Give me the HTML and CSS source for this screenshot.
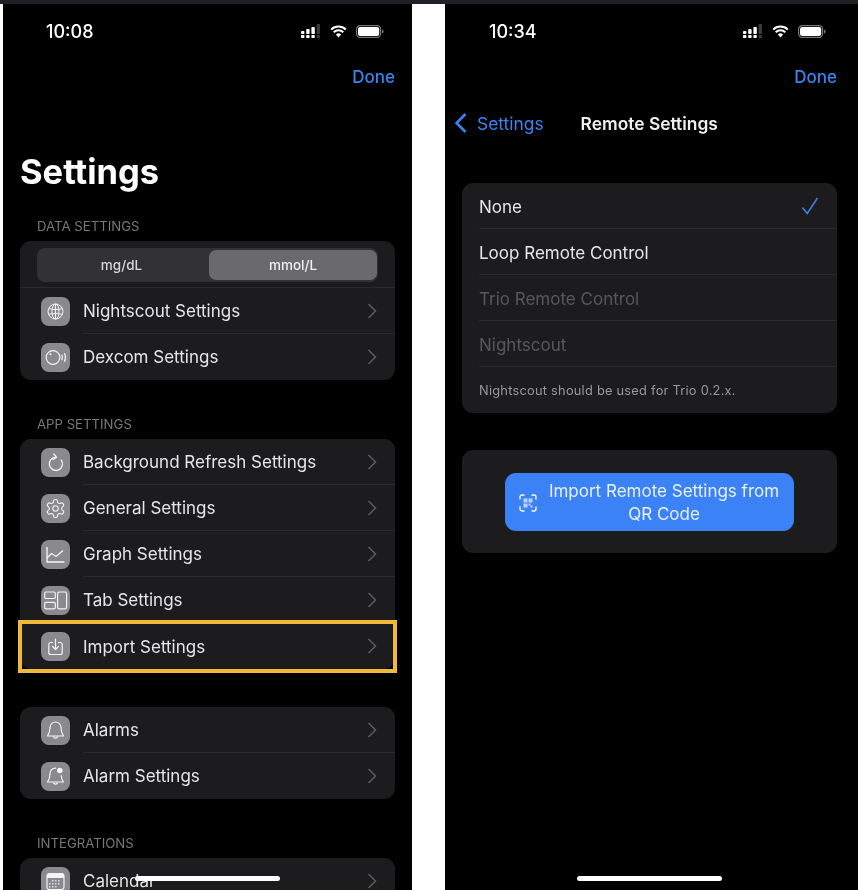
FILE: index.html
```html
<!DOCTYPE html>
<html>
<head>
    <meta charset="UTF-8">
    <title>Settings</title>
    <link rel="stylesheet" href="styles.css">
</head>
<body>
    <div class="strip"></div>
    <div class="screens">
        <section class="phone phone-a">
            <div class="status">
                <span class="time">10:08</span>
                <div class="status-icons">
                    <svg width="20" height="14" viewBox="0 0 20 14"><g fill="#fff"><rect x="0" y="7" width="3.4" height="3" rx=".8"/><rect x="0" y="11" width="3.4" height="3" rx=".8"/><rect x="5.2" y="5" width="3.4" height="5" rx=".8"/><rect x="5.2" y="11" width="3.4" height="3" rx=".8"/><rect x="10.4" y="3" width="3.4" height="7" rx=".8"/><rect x="10.4" y="11" width="3.4" height="3" rx=".8"/></g><g fill="#3a3a3c"><rect x="15.6" y="0" width="3.4" height="10" rx=".8"/><rect x="15.6" y="11" width="3.4" height="3" rx=".8"/></g></svg>
                    <svg width="17" height="13" viewBox="0 0 17 13"><path d="M1.2 4.6a10.4 10.4 0 0 1 14.6 0M3.7 7.2a6.9 6.9 0 0 1 9.6 0" fill="none" stroke="#fff" stroke-width="2"/><path d="M5.9 9.5a3.7 3.7 0 0 1 5.2 0L8.5 12.6z" fill="#fff"/></svg>
                    <svg width="28" height="13" viewBox="0 0 28 13"><rect x=".6" y=".6" width="24" height="11.8" rx="3.6" fill="none" stroke="#77777a" stroke-width="1.2"/><rect x="2" y="2" width="21.2" height="9" rx="2.2" fill="#fff"/><path d="M26 4.5c1 .3 1.6 1 1.6 2s-.6 1.7-1.6 2z" fill="#77777a"/></svg>
                </div>
            </div>
            <div class="nav"><a class="done">Done</a></div>
            <h1 class="title">Settings</h1>

            <h2 class="group-label first">DATA SETTINGS</h2>
            <div class="card">
                <div class="units">
                    <div class="units-box">
                        <span class="unit">mg/dL</span>
                        <span class="unit unit-on">mmol/L</span>
                    </div>
                </div>
                <div class="row">
                    <span class="icon"><svg width="29" height="29" viewBox="0 0 29 29"><g fill="none" stroke="#fff" stroke-width="1"><circle cx="14.5" cy="14.5" r="7.5"/><ellipse cx="14.5" cy="14.5" rx="3.5" ry="7.5"/><path d="M14.5 7v15M7.6 11.5c4 1.3 9.8 1.3 13.8 0M7.6 17.5c4-1.3 9.8-1.3 13.8 0"/></g></svg></span>
                    <span class="label">Nightscout Settings</span>
                    <svg class="chev" width="10" height="16" viewBox="0 0 10 16"><path d="M1.5 1l7 7-7 7"/></svg>
                </div>
                <div class="row">
                    <span class="icon"><svg width="29" height="29" viewBox="0 0 29 29"><g fill="none" stroke="#fff"><circle cx="12" cy="14.5" r="6.8" stroke-width="1.2"/><path d="M20.8 11.8c.9 1.8.9 3.6 0 5.4" stroke-width="1.3"/><path d="M23.4 10.3c1.4 2.8 1.4 5.6 0 8.4" stroke-width="1.3"/></g><circle cx="9.5" cy="11.2" r="1" fill="#fff"/></svg></span>
                    <span class="label">Dexcom Settings</span>
                    <svg class="chev" width="10" height="16" viewBox="0 0 10 16"><path d="M1.5 1l7 7-7 7"/></svg>
                </div>
            </div>

            <h2 class="group-label">APP SETTINGS</h2>
            <div class="card">
                <div class="row">
                    <span class="icon"><svg width="29" height="29" viewBox="0 0 29 29"><g fill="none" stroke="#fff" stroke-width="1.3" stroke-linecap="round" stroke-linejoin="round"><path d="M15 9.2a6.6 6.6 0 1 0 5.2 2.7"/><path d="M12.8 6l2.7 3.1-3.3 2.4"/></g></svg></span>
                    <span class="label">Background Refresh Settings</span>
                    <svg class="chev" width="10" height="16" viewBox="0 0 10 16"><path d="M1.5 1l7 7-7 7"/></svg>
                </div>
                <div class="row">
                    <span class="icon"><svg width="29" height="29" viewBox="0 0 29 29"><g transform="translate(3.7 3.7) scale(.9)" fill="none" stroke="#fff" stroke-width="1.2"><path d="M12.22 2h-.44a2 2 0 0 0-2 2v.18a2 2 0 0 1-1 1.73l-.43.25a2 2 0 0 1-2 0l-.15-.08a2 2 0 0 0-2.73.73l-.22.38a2 2 0 0 0 .73 2.73l.15.1a2 2 0 0 1 1 1.72v.51a2 2 0 0 1-1 1.74l-.15.09a2 2 0 0 0-.73 2.73l.22.38a2 2 0 0 0 2.73.73l.15-.08a2 2 0 0 1 2 0l.43.25a2 2 0 0 1 1 1.73V20a2 2 0 0 0 2 2h.44a2 2 0 0 0 2-2v-.18a2 2 0 0 1 1-1.73l.43-.25a2 2 0 0 1 2 0l.15.08a2 2 0 0 0 2.73-.73l.22-.39a2 2 0 0 0-.73-2.73l-.15-.08a2 2 0 0 1-1-1.74v-.5a2 2 0 0 1 1-1.74l.15-.09a2 2 0 0 0 .73-2.73l-.22-.38a2 2 0 0 0-2.73-.73l-.15.08a2 2 0 0 1-2 0l-.43-.25a2 2 0 0 1-1-1.73V4a2 2 0 0 0-2-2z"/><circle cx="12" cy="12" r="3"/></g></svg></span>
                    <span class="label">General Settings</span>
                    <svg class="chev" width="10" height="16" viewBox="0 0 10 16"><path d="M1.5 1l7 7-7 7"/></svg>
                </div>
                <div class="row">
                    <span class="icon"><svg width="29" height="29" viewBox="0 0 29 29"><g fill="none" stroke="#fff" stroke-linejoin="round"><path d="M6 7v15h17.5" stroke-width="1.4"/><path d="M6 18l4.5-4.5 4.5 3 7-6" stroke-width="1.2"/></g></svg></span>
                    <span class="label">Graph Settings</span>
                    <svg class="chev" width="10" height="16" viewBox="0 0 10 16"><path d="M1.5 1l7 7-7 7"/></svg>
                </div>
                <div class="row">
                    <span class="icon"><svg width="29" height="29" viewBox="0 0 29 29"><g fill="none" stroke="#fff" stroke-width="1.2"><rect x="3.7" y="6" width="10.6" height="6.5" rx="1.3"/><rect x="3.7" y="16.3" width="10.6" height="6.5" rx="1.3"/><rect x="16.6" y="6" width="9" height="16.8" rx="1.5"/></g></svg></span>
                    <span class="label">Tab Settings</span>
                    <svg class="chev" width="10" height="16" viewBox="0 0 10 16"><path d="M1.5 1l7 7-7 7"/></svg>
                </div>
                <div class="row row-marked">
                    <span class="icon"><svg width="29" height="29" viewBox="0 0 29 29"><g fill="none" stroke="#fff" stroke-width="1.2" stroke-linecap="round" stroke-linejoin="round"><path d="M11.5 10.5H9.8a2 2 0 0 0-2 2v8a2 2 0 0 0 2 2h9.4a2 2 0 0 0 2-2v-8a2 2 0 0 0-2-2h-1.7"/><path d="M14.5 7v10.500M11.500 14.500l3 3 3-3"/></g></svg></span>
                    <span class="label">Import Settings</span>
                    <svg class="chev" width="10" height="16" viewBox="0 0 10 16"><path d="M1.5 1l7 7-7 7"/></svg>
                </div>
            </div>

            <div class="card card-loose">
                <div class="row">
                    <span class="icon"><svg width="29" height="29" viewBox="0 0 29 29"><g fill="none" stroke="#fff" stroke-width="1.2" stroke-linejoin="round"><path d="M14.5 6a5.5 5.5 0 0 0-5.5 5.5c0 4.5-1 6.5-2.5 8.5h16c-1.5-2-2.5-4-2.5-8.5A5.5 5.5 0 0 0 14.5 6z"/><path d="M12.3 20.5a2.3 2.3 0 0 0 4.400 0"/></g></svg></span>
                    <span class="label">Alarms</span>
                    <svg class="chev" width="10" height="16" viewBox="0 0 10 16"><path d="M1.5 1l7 7-7 7"/></svg>
                </div>
                <div class="row">
                    <span class="icon"><svg width="29" height="29" viewBox="0 0 29 29"><g fill="none" stroke="#fff" stroke-width="1.2" stroke-linejoin="round"><path d="M15 6.2a5.5 5.5 0 0 0-6 5.3c0 4.5-1 6.5-2.5 8.500h16c-1.300-1.800-2.200-3.500-2.400-6.700"/><path d="M12.3 20.5a2.3 2.3 0 0 0 4.4 0"/></g><circle cx="18.8" cy="8.5" r="2.8" fill="#fff"/></svg></span>
                    <span class="label">Alarm Settings</span>
                    <svg class="chev" width="10" height="16" viewBox="0 0 10 16"><path d="M1.5 1l7 7-7 7"/></svg>
                </div>
            </div>

            <h2 class="group-label">INTEGRATIONS</h2>
            <div class="card">
                <div class="row">
                    <span class="icon"><svg width="29" height="29" viewBox="0 0 29 29"><rect x="6" y="6.5" width="17" height="16" rx="2.5" fill="none" stroke="#fff" stroke-width="1.2"/><path d="M6 9a2.5 2.5 0 0 1 2.5-2.5h12A2.5 2.5 0 0 1 23 9v2H6z" fill="#fff"/><g fill="#fff" opacity=".75"><rect x="11" y="13" width="1.5" height="1.5"/><rect x="14" y="13" width="1.5" height="1.5"/><rect x="17" y="13" width="1.5" height="1.5"/><rect x="8" y="16" width="1.5" height="1.5"/><rect x="11" y="16" width="1.5" height="1.5"/><rect x="14" y="16" width="1.5" height="1.5"/><rect x="17" y="16" width="1.5" height="1.5"/><rect x="8" y="19" width="1.5" height="1.5"/><rect x="11" y="19" width="1.5" height="1.5"/><rect x="14" y="19" width="1.5" height="1.5"/></g></svg></span>
                    <span class="label">Calendar</span>
                    <svg class="chev" width="10" height="16" viewBox="0 0 10 16"><path d="M1.5 1l7 7-7 7"/></svg>
                </div>
            </div>
            <div class="home-bar"></div>
        </section>

        <section class="phone phone-b">
            <div class="status">
                <span class="time">10:34</span>
                <div class="status-icons">
                    <svg width="20" height="14" viewBox="0 0 20 14"><g fill="#fff"><rect x="0" y="7" width="3.4" height="3" rx=".8"/><rect x="0" y="11" width="3.4" height="3" rx=".8"/><rect x="5.2" y="5" width="3.4" height="5" rx=".8"/><rect x="5.2" y="11" width="3.4" height="3" rx=".8"/><rect x="10.4" y="3" width="3.4" height="7" rx=".8"/><rect x="10.4" y="11" width="3.4" height="3" rx=".8"/></g><g fill="#3a3a3c"><rect x="15.6" y="0" width="3.4" height="10" rx=".8"/><rect x="15.6" y="11" width="3.4" height="3" rx=".8"/></g></svg>
                    <svg width="17" height="13" viewBox="0 0 17 13"><path d="M1.2 4.6a10.4 10.4 0 0 1 14.6 0M3.7 7.2a6.9 6.9 0 0 1 9.6 0" fill="none" stroke="#fff" stroke-width="2"/><path d="M5.9 9.5a3.7 3.7 0 0 1 5.2 0L8.5 12.6z" fill="#fff"/></svg>
                    <svg width="28" height="13" viewBox="0 0 28 13"><rect x=".6" y=".6" width="24" height="11.8" rx="3.6" fill="none" stroke="#77777a" stroke-width="1.2"/><rect x="2" y="2" width="21.2" height="9" rx="2.2" fill="#fff"/><path d="M26 4.5c1 .3 1.6 1 1.6 2s-.6 1.7-1.6 2z" fill="#77777a"/></svg>
                </div>
            </div>
            <div class="nav"><a class="done">Done</a></div>
            <div class="back-row">
                <svg class="back-chev" width="14" height="22" viewBox="0 0 14 22"><path d="M11.5 2L2.5 11l9 9"/></svg>
                <a class="back-link">Settings</a>
                <span class="back-title">Remote Settings</span>
            </div>

            <div class="card card-options">
                <div class="row row-plain">
                    <span class="label">None</span>
                    <svg class="check" width="18" height="18" viewBox="0 0 18 18"><path d="M1.5 10.5L6.2 16.5 16.5 1"/></svg>
                </div>
                <div class="row row-plain"><span class="label">Loop Remote Control</span></div>
                <div class="row row-plain"><span class="label label-off">Trio Remote Control</span></div>
                <div class="row row-plain"><span class="label label-off">Nightscout</span></div>
                <div class="row row-plain"><span class="note">Nightscout should be used for Trio 0.2.x.</span></div>
            </div>

            <div class="card card-import">
                <a class="qr-button">
                    <svg class="qr-icon" width="20" height="20" viewBox="0 0 20 20"><g fill="none" stroke="#fff" stroke-width="1.3" stroke-linecap="round"><path d="M2 6V4a2 2 0 0 1 2-2h2M14 2h2a2 2 0 0 1 2 2v2M18 14v2a2 2 0 0 1-2 2h-2M6 18H4a2 2 0 0 1-2-2v-2"/></g><g fill="#bcd4fb"><rect x="5.5" y="5.5" width="4" height="4"/><rect x="10.5" y="5.5" width="4" height="4"/><rect x="5.5" y="10.5" width="4" height="4"/><rect x="10.5" y="10.5" width="2" height="2"/><rect x="12.5" y="12.5" width="2" height="2"/></g></svg>
                    <span class="qr-text">Import Remote Settings from QR Code</span>
                </a>
            </div>
            <div class="home-bar"></div>
        </section>
    </div>
</body>
</html>
```

FILE: styles.css
```css
*{
    box-sizing:border-box;
}
html,body{
    margin:0;
    height:100%;
    overflow:hidden;
}
body{
    background:#fff;
    font-family:Inter,"Liberation Sans",sans-serif;
    color:#e6e6e8;
}
.strip{
    height:4px;
    background:#1d2125;
}
.screens{
    display:flex;
    height:886px;
    padding-left:3px;
    gap:33px;
}
.phone{
    position:relative;
    background:#000;
    height:886px;
    overflow:hidden;
    filter:blur(.4px);
}
.phone-a{
    width:409px;
    padding:0 17px;
}
.phone-b{
    width:413px;
    padding:0 21px 0 17px;
}

/* status bar */
.status{
    height:54px;
    display:flex;
    align-items:center;
    justify-content:space-between;
    padding:0 11px 0 26px;
}
.phone-b .status{
    padding-left:27px;
}
.time{
    font-size:18px;
    font-weight:500;
    color:#fff;
}
.status-icons{
    display:flex;
    align-items:center;
    gap:9px;
}
.status-icons svg{
    display:block;
}

.nav{
    height:38px;
    display:flex;
    align-items:center;
    justify-content:flex-end;
}
.done{
    font-size:17px;
    font-weight:500;
    color:#3b82f0;
}
.title{
    margin:56px 0 0;
    font-size:34.5px;
    line-height:40px;
    font-weight:700;
    color:#fff;
}
.group-label{
    margin:35px 0 6px;
    padding-left:17px;
    font-size:13.2px;
    line-height:18px;
    font-weight:400;
    color:#77777b;
}
.group-label.first{
    margin-top:25px;
}

/* cards and rows */
.card{
    background:#1c1c1e;
    border-radius:11px;
}
.card-loose{
    margin-top:38px;
}
.units{
    padding:7px 17px 5px;
    border-bottom:1px solid #2a2a2c;
}
.units-box{
    display:flex;
    height:34px;
    padding:2px 1px;
    background:#323236;
    border-radius:8px;
}
.unit{
    flex:1;
    display:flex;
    align-items:center;
    justify-content:center;
    font-size:13.5px;
    font-weight:500;
    color:#d8d8da;
    border-radius:7px;
}
.unit:first-child{
    padding-right:4px;
}
.unit-on{
    flex:none;
    width:168px;
    background:#69696e;
    color:#f0f0f0;
}
.row{
    position:relative;
    height:46px;
    display:flex;
    align-items:center;
    padding:0 18px 0 21px;
}
.row:not(:last-child)::before{
    content:"";
    position:absolute;
    left:63px;
    right:0;
    bottom:0;
    height:1px;
    background:#2a2a2c;
}
.row-marked::after{
    content:"";
    position:absolute;
    top:-3px;
    left:-2px;
    right:-2px;
    bottom:-4px;
    border:4px solid #f0b93a;
}
.icon{
    flex:none;
    width:29px;
    height:29px;
    margin-right:13px;
    background:#8a8a8e;
    border-radius:8px;
}
.icon svg{
    display:block;
    opacity:.9;
}
.label{
    flex:1;
    font-size:17px;
    color:#e6e6e8;
}
.row-marked .label,
.row-plain .label{
    padding-top:1px;
}
.chev{
    flex:none;
    fill:none;
    stroke:#5c5c60;
    stroke-width:1.5;
}

/* remote settings side */
.back-row{
    height:54px;
    display:flex;
    align-items:center;
    margin-left:-8px;
}
.back-chev{
    fill:none;
    stroke:#3b82f0;
    stroke-width:2.5;
}
.back-link{
    margin-left:9px;
    font-size:17.4px;
    color:#3b82f0;
}
.back-title{
    margin-left:37px;
    font-size:17.4px;
    font-weight:600;
    color:#efeff0;
}
.card-options{
    margin-top:33px;
}
.row-plain{
    padding:0 18px 0 17px;
}
.row-plain:not(:last-child)::before{
    left:17px;
}
.label-off{
    color:#58585c;
}
.note{
    font-size:12.8px;
    letter-spacing:.25px;
    color:#98989c;
}
.check{
    fill:none;
    stroke:#3b82f0;
    stroke-width:1.5;
}
.card-import{
    margin-top:37px;
    padding:23px 43px 22px;
}
.qr-button{
    width:289px;
    height:58px;
    display:flex;
    align-items:center;
    padding:1px 13px 0 13px;
    background:#3b82f6;
    border-radius:11px;
}
.qr-icon{
    flex:none;
}
.qr-text{
    flex:1;
    padding-left:9px;
    font-size:17px;
    line-height:23px;
    text-align:center;
    color:#e8f0ff;
}
.home-bar{
    position:absolute;
    left:132px;
    bottom:9px;
    width:145px;
    height:5px;
    background:#fff;
    border-radius:3px;
}
```
